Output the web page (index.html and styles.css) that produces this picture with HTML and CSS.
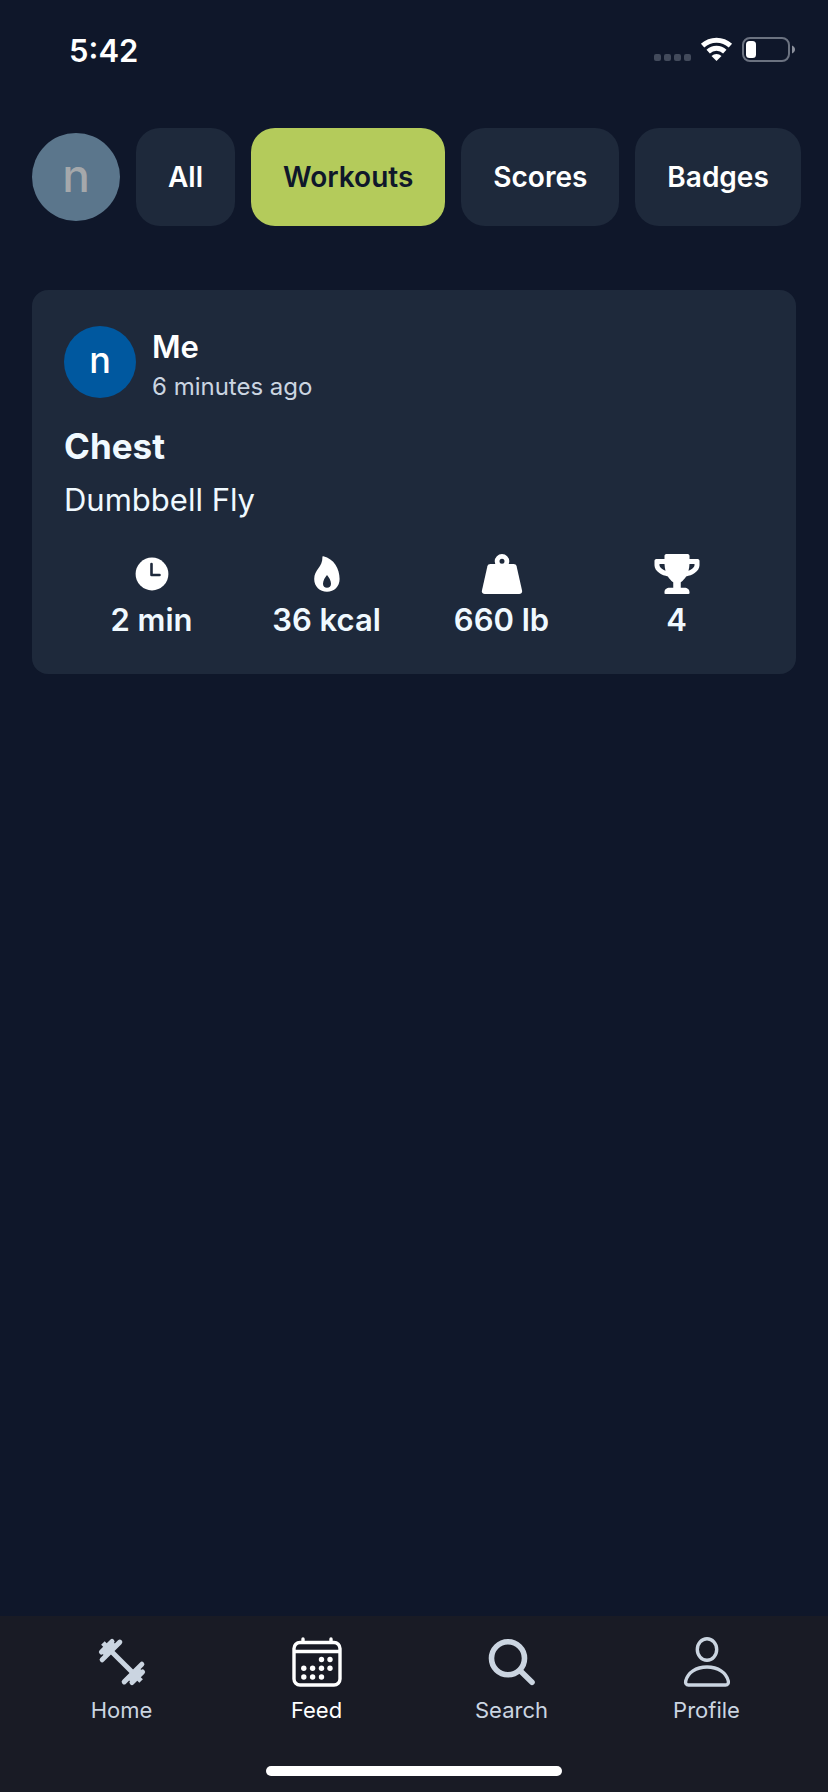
FILE: index.html
```html
<!DOCTYPE html>
<html lang="en">
<head>
<meta charset="utf-8">
<meta name="viewport" content="width=device-width, initial-scale=1">
<title>Feed</title>
<link rel="stylesheet" href="styles.css">
</head>
<body>
<div class="app">
  <header class="status">
    <span class="status-time">5:42</span>
    <svg class="status-icons" width="144" height="28" viewBox="0 0 144 28" aria-hidden="true">
      <g fill="#424a5b"><rect x="3" y="18" width="7" height="7" rx="2"/><rect x="13" y="18" width="7" height="7" rx="2"/><rect x="23" y="18" width="7" height="7" rx="2"/><rect x="33" y="18" width="7" height="7" rx="2"/></g>
      <g fill="none" stroke="#fff" stroke-width="5"><path d="M51.600 9.600a20.500 20.500 0 0 1 27.800 0"/><path d="M57.200 15.600a12.200 12.200 0 0 1 16.600 0"/></g>
      <path d="M65.500 25l-5-5a7.300 7.300 0 0 1 10 0z" fill="#fff"/>
      <rect x="92" y="2" width="46" height="23" rx="7" fill="none" stroke="#6b7280" stroke-width="2"/>
      <rect x="95" y="5" width="10" height="17" rx="3.500" fill="#fff"/>
      <path d="M141 9.500c4 1.500 4 6.500 0 8z" fill="#8a8f9b"/>
    </svg>
  </header>

  <nav class="filters" aria-label="Feed filters">
    <button class="avatar avatar-large" type="button">n</button>
    <button class="chip" type="button">All</button>
    <button class="chip chip-active" type="button" aria-pressed="true">Workouts</button>
    <button class="chip" type="button">Scores</button>
    <button class="chip" type="button">Badges</button>
  </nav>

  <main class="feed">
    <article class="card">
      <div class="author">
        <span class="avatar avatar-small">n</span>
        <div class="author-text">
          <span class="author-name">Me</span>
          <time class="author-time">6 minutes ago</time>
        </div>
      </div>
      <h2 class="title">Chest</h2>
      <p class="exercise">Dumbbell Fly</p>
      <ul class="stats">
        <li class="stat">
          <svg width="48" height="48" viewBox="0 0 48 48" aria-hidden="true"><circle cx="24" cy="24" r="16.400" fill="#fff"/><path d="M23.500 14v11h8" fill="none" stroke="#1e293b" stroke-width="2.600" stroke-linecap="round" stroke-linejoin="round"/></svg>
          <span>2 min</span>
        </li>
        <li class="stat">
          <svg width="48" height="48" viewBox="0 0 48 48" aria-hidden="true"><path fill="#fff" fill-rule="evenodd" d="M20.300 6.200C31 8.500 36.600 19 36.600 29c0 7.500-5.400 12.700-12.600 12.700S11.200 36.500 11.200 29C11.200 19.500 19.800 17 19.400 7.200 19.300 6.300 19.600 6 20.300 6.200zM24 25c-2 2.500-4 5.500-4 8.800 0 2.500 1.600 4 4 4s4-1.500 4-4C28 30.500 26 27.500 24 25z"/></svg>
          <span>36 kcal</span>
        </li>
        <li class="stat">
          <svg width="48" height="48" viewBox="0 0 48 48" aria-hidden="true"><path fill="#fff" d="M12.500 14h23c1.700 0 2.700.8 3.100 2.300L44 40.300c.5 2.300-.7 3.700-2.800 3.700H6.800C4.700 44 3.500 42.600 4 40.300l5.400-24C9.800 14.800 10.800 14 12.500 14z"/><circle cx="24" cy="11.300" r="4.900" fill="#1e293b" stroke="#fff" stroke-width="4.800"/></svg>
          <span>660 lb</span>
        </li>
        <li class="stat">
          <svg width="48" height="48" viewBox="-19 -51 614 614" aria-hidden="true"><path fill="#fff" d="M552 64H448V24c0-13.300-10.700-24-24-24H152c-13.300 0-24 10.700-24 24v40H24C10.700 64 0 74.700 0 88v56c0 35.700 22.500 72.400 61.900 100.700 31.500 22.700 69.800 37.100 110 41.700C203.300 338.500 240 360 240 360v72h-48c-35.300 0-64 20.700-64 56v12c0 6.600 5.400 12 12 12h296c6.600 0 12-5.400 12-12v-12c0-35.300-28.700-56-64-56h-48v-72s36.700-21.500 68.100-73.600c40.300-4.600 78.600-19 110-41.700 39.300-28.300 61.900-65 61.900-100.700V88c0-13.300-10.700-24-24-24zM99.300 192.800C74.900 175.200 64 155.600 64 144v-16h64.200c1 32.600 5.800 61.200 12.800 86.200-15.100-5.200-29.200-12.400-41.700-21.400zM512 144c0 16.100-17.700 36.100-35.300 48.800-12.500 9-26.700 16.200-41.800 21.400 7-25 11.800-53.600 12.800-86.200H512v16z"/></svg>
          <span>4</span>
        </li>
      </ul>
    </article>
  </main>

  <footer class="tabbar">
    <nav class="tabs" aria-label="Main">
      <a class="tab" href="#home">
        <svg width="52" height="52" viewBox="0 0 52 52" aria-hidden="true"><g transform="rotate(45 26 26)" fill="none" stroke="currentColor" stroke-width="5"><path d="M-1 26h54"/><path d="M4.400 18.500v15M10.400 13.500v25M47.600 18.500v15M41.600 13.500v25" stroke-linecap="round"/><path d="M7.400 18v16M44.600 18v16"/></g></svg>
        <span>Home</span>
      </a>
      <a class="tab tab-active" href="#feed" aria-current="page">
        <svg width="52" height="52" viewBox="0 0 52 52" aria-hidden="true"><g fill="none" stroke="currentColor" stroke-width="3.400"><rect x="3" y="6.500" width="46" height="42.500" rx="6"/><path d="M3 15.500h46"/><path d="M12 6V3M40 6V3" stroke-linecap="round"/></g><g fill="currentColor"><circle cx="30.500" cy="23.500" r="2.700"/><circle cx="39" cy="23.500" r="2.700"/><circle cx="12.800" cy="32.200" r="2.700"/><circle cx="21.600" cy="32.200" r="2.700"/><circle cx="30.500" cy="32.200" r="2.700"/><circle cx="39" cy="32.200" r="2.700"/><circle cx="12.800" cy="41" r="2.700"/><circle cx="21.600" cy="41" r="2.700"/><circle cx="30.500" cy="41" r="2.700"/></g></svg>
        <span>Feed</span>
      </a>
      <a class="tab" href="#search">
        <svg width="52" height="52" viewBox="0 0 52 52" aria-hidden="true"><g fill="none" stroke="currentColor" stroke-linecap="round"><circle cx="22" cy="22.300" r="16.500" stroke-width="5.600"/><path d="M34.500 35l11.500 11.300" stroke-width="5.600"/></g></svg>
        <span>Search</span>
      </a>
      <a class="tab" href="#profile">
        <svg width="52" height="52" viewBox="0 0 52 52" aria-hidden="true"><g fill="none" stroke="currentColor" stroke-width="3.400"><ellipse cx="26" cy="13.500" rx="9.700" ry="10.800"/><path d="M7.500 49h37c2.200 0 3.300-1.700 2.800-4C45.300 36.500 37 31 26 31S6.700 36.500 4.700 45c-.5 2.300.6 4 2.800 4z"/></g></svg>
        <span>Profile</span>
      </a>
    </nav>
    <div class="home-indicator"></div>
  </footer>
</div>
</body>
</html>
```
FILE: styles.css
```css
* {
  box-sizing: border-box;
}

body {
  margin: 0;
  background: #0f172a;
  color: #fff;
  font-family: Inter, "Liberation Sans", sans-serif;
}

button {
  border: 0;
  font: inherit;
  color: inherit;
}

.app {
  display: flex;
  flex-direction: column;
  min-height: 100vh;
}

.status {
  display: flex;
  align-items: center;
  justify-content: space-between;
  height: 100px;
  padding: 0 33px 0 69px;
}

.status-time {
  font-size: 31px;
  font-weight: 600;
}

.filters {
  display: flex;
  align-items: center;
  gap: 16px;
  padding: 28px 0 0 32px;
  overflow: hidden;
}

.chip {
  flex: none;
  padding: 32px;
  border-radius: 24px;
  background: #1e293b;
  font-size: 28px;
  font-weight: 600;
  line-height: 34px;
}

.chip-active {
  background: #b4cb5b;
  color: #0f172a;
}

.avatar {
  display: flex;
  flex: none;
  align-items: center;
  justify-content: center;
  padding: 0 0 4px;
  border-radius: 50%;
}

.avatar-large {
  width: 88px;
  height: 88px;
  background: #5b768c;
  color: #a5a8ab;
  font-size: 46px;
  font-weight: 500;
}

.avatar-small {
  width: 72px;
  height: 72px;
  background: #00589f;
  font-size: 36px;
  font-weight: 500;
}

.feed {
  flex: 1;
  padding: 64px 32px;
}

.card {
  padding: 32px;
  border-radius: 16px;
  background: #1e293b;
}

.author {
  display: flex;
  align-items: center;
  gap: 16px;
}

.author-text {
  display: flex;
  flex-direction: column;
}

.author-name {
  font-size: 31px;
  font-weight: 600;
  line-height: 50px;
}

.author-time {
  color: #cbd5e1;
  font-size: 24px;
  line-height: 30px;
}

.title {
  margin: 16px 0 0;
  color: #f0f9ff;
  font-size: 35px;
  font-weight: 700;
  line-height: 56px;
}

.exercise {
  margin: 0;
  color: #f0f9ff;
  font-size: 31px;
  line-height: 52px;
}

.stats {
  display: grid;
  grid-template-columns: repeat(4, 1fr);
  margin: 24px 0 0;
  padding: 0;
  list-style: none;
}

.stat {
  display: flex;
  flex-direction: column;
  align-items: center;
  color: #f0f9ff;
  font-size: 31px;
  font-weight: 600;
  line-height: 44px;
}

.tabbar {
  display: flex;
  flex-direction: column;
  align-items: center;
  gap: 40px;
  padding: 20px 24px 16px;
  background: #191b25;
}

.tabs {
  display: grid;
  grid-template-columns: repeat(4, 1fr);
  width: 100%;
}

.tab {
  display: flex;
  flex-direction: column;
  align-items: center;
  gap: 6px;
  color: #cbd5e1;
  font-size: 22px;
  line-height: 32px;
  text-decoration: none;
}

.tab-active {
  color: #fff;
}

.home-indicator {
  width: 296px;
  height: 10px;
  border-radius: 5px;
  background: #fff;
}
```
